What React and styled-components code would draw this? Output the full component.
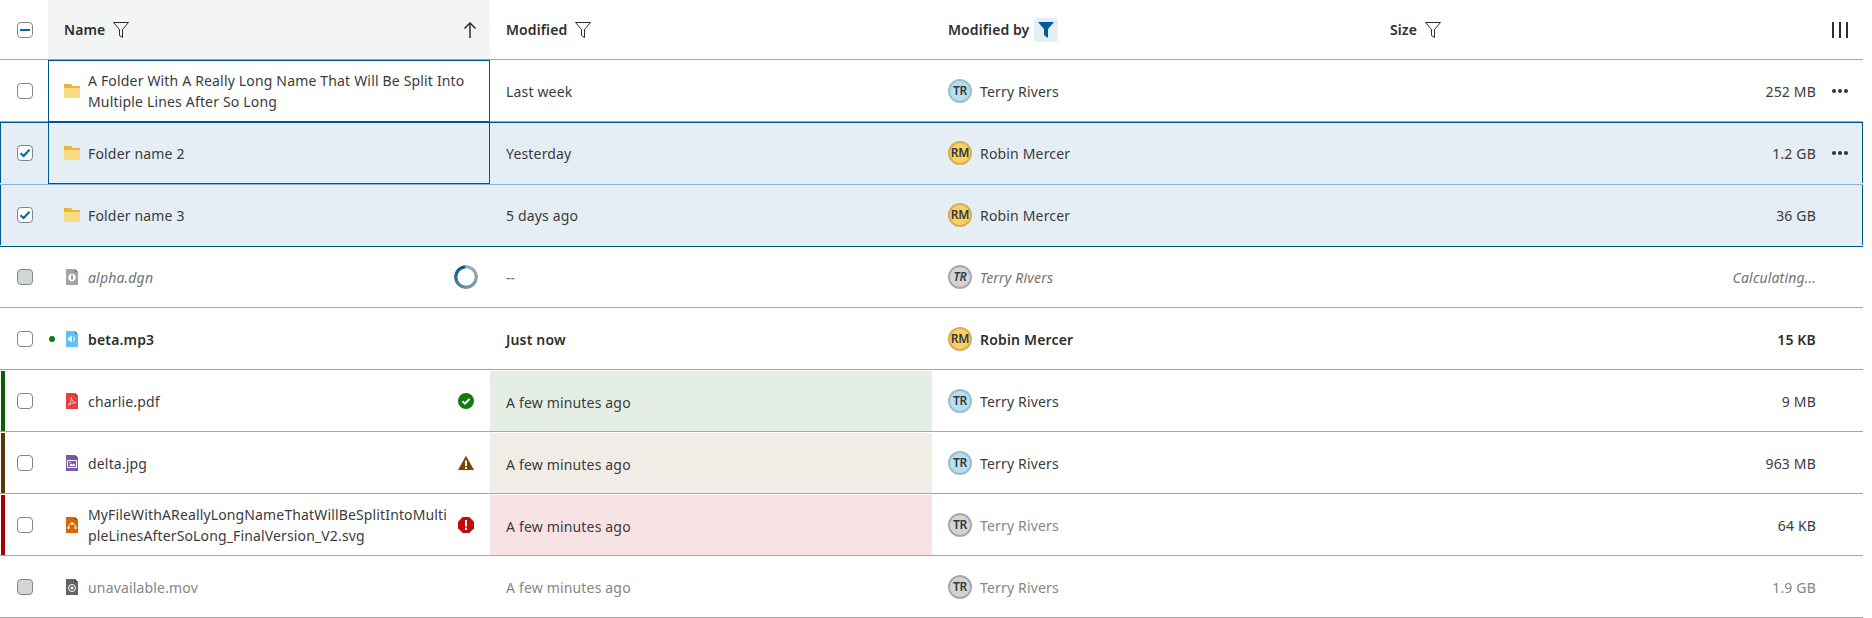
import React from "react";
import styled, { createGlobalStyle, css } from "styled-components";

const Global = createGlobalStyle`
  html, body { margin: 0; padding: 0; background: #fff; }
  body { font-family: "Noto Sans", "Open Sans", sans-serif; font-size: 14px; color: #3b3b3b; }
`;

const BLUE = "#00558a";
const LIGHT_BLUE = "#7fb6d6";
const columns = "48px 442px 442px 442px 458px 31px";

const Table = styled.div`
  width: 1863px;
  display: flex;
  flex-direction: column;
`;
const HeaderRow = styled.div`
  display: grid;
  grid-template-columns: ${columns};
  height: 60px;
  box-sizing: border-box;
  border-bottom: 1px solid #a6a6a6;
  font-weight: 600;
  letter-spacing: 0.1px;
  color: #2e2e2e;
`;
const HeaderCell = styled.div`
  display: flex;
  align-items: center;
  padding-left: ${(p) => (p.$flush ? 0 : 16)}px;
  padding-right: ${(p) => (p.$flush ? 0 : 12)}px;
  background: ${(p) => (p.$sorted ? "#f3f5f5" : "transparent")};
`;
const HeaderLabel = styled.span`
  margin-right: 8px;
`;
const Grow = styled.span`
  flex: 1;
`;
const ActiveFilter = styled.span`
  width: 24px;
  height: 24px;
  margin-left: -3px;
  border-radius: 3px;
  background: #e5eef5;
  display: flex;
  align-items: center;
  justify-content: center;
`;
const Row = styled.div`
  position: relative;
  display: grid;
  grid-template-columns: ${columns};
  height: 62px;
  box-sizing: border-box;
  border-bottom: 1px solid ${(p) => (p.$selected ? "transparent" : "#a6a6a6")};
  letter-spacing: 0.17px;
  font-weight: ${(p) => (p.$tone === "bold" ? 600 : 400)};
  font-style: ${(p) => (p.$tone === "pending" ? "italic" : "normal")};
  color: ${(p) => (p.$tone === "pending" ? "#727272" : p.$tone === "muted" ? "#858585" : p.$tone === "bold" ? "#2e2e2e" : "#3b3b3b")};
  background: ${(p) => (p.$selected ? "#e5edf5" : "#fff")};
  box-shadow: ${(p) =>
    [
      p.$top && `inset 0 1px ${p.$top}`,
      p.$selected && `inset 1px 0 ${BLUE}`,
      p.$selected && `inset -1px 0 ${BLUE}`,
    ]
      .filter(Boolean)
      .join(", ") || "none"};
  ${(p) => p.$strip && css`
    &::before {
      content: "";
      position: absolute;
      left: 1px;
      top: 1px;
      bottom: 0;
      width: 4px;
      background: ${p.$strip};
    }
  `}
`;
const CheckCell = styled.div`
  display: flex;
  align-items: center;
  justify-content: center;
  padding-left: 2px;
`;
const NameCell = styled.div`
  position: relative;
  display: flex;
  align-items: center;
  padding: 0 16px;
  ${(p) => p.$focused && css`
    &::after {
      content: "";
      position: absolute;
      inset: 0 0 -1px 0;
      border: 1px solid ${BLUE};
      pointer-events: none;
    }
  `}
`;
const TypeIcon = styled.span`
  width: 16px;
  flex: none;
  display: flex;
  justify-content: center;
  margin-right: 8px;
`;
const NewDot = styled.span`
  position: absolute;
  left: 1px;
  top: 28px;
  width: 6px;
  height: 6px;
  border-radius: 50%;
  background: #107c10;
`;
const FileName = styled.span`
  flex: 1;
  line-height: 21px;
  margin-top: ${(p) => (p.$wrapped ? 1 : 2)}px;
  ${(p) => p.$long && css`
    word-break: break-all;
    letter-spacing: 0.14px;
    padding-right: 6px;
  `}
`;
const TextCell = styled.div`
  display: flex;
  align-items: center;
  padding: 0 16px;
  ${(p) => p.$tint && css`
    background: ${p.$tint};
    background-clip: padding-box;
    border-top: 1px solid transparent;
  `}
`;
const SizeCell = styled(TextCell)`
  justify-content: flex-end;
`;
const Value = styled.span`
  margin-top: 2px;
  color: ${(p) => (p.$dim ? "#858585" : "inherit")};
`;
const ActionCell = styled.div`
  display: flex;
  align-items: center;
`;
const Avatar = styled.span`
  width: 24px;
  height: 24px;
  box-sizing: border-box;
  flex: none;
  border-radius: 50%;
  margin-right: 8px;
  border: 2px solid ${(p) => p.$ring};
  background: ${(p) => p.$fill};
  color: #2f3a40;
  font-size: 12px;
  font-weight: 600;
  letter-spacing: -0.2px;
  display: flex;
  align-items: center;
  justify-content: center;
`;
const Box = styled.span`
  width: 16px;
  height: 16px;
  box-sizing: border-box;
  border-radius: 4px;
  border: 1px solid #7f8688;
  background: ${(p) => (p.$disabled ? "#d2d6d7" : "#fff")};
  display: flex;
  align-items: center;
  justify-content: center;
`;
const Spinner = styled.span`
  width: 24px;
  height: 24px;
  flex: none;
  margin-right: -4px;
  border-radius: 50%;
  background: conic-gradient(#a6aeb3 0deg, #8ea1ae 90deg, #6d93ab 180deg, #2b6e97 270deg, #00588c 350deg, #a6aeb3 360deg);
  -webkit-mask: radial-gradient(circle, transparent 8.3px, #000 8.8px);
  mask: radial-gradient(circle, transparent 8.3px, #000 8.8px);
`;

const Funnel = () => (
  <svg width="16" height="16" viewBox="0 0 16 16" fill="none" stroke="#2e2e2e" strokeWidth="1">
    <path d="M.5 .5h15l-6 7v8l-3-2v-6z" />
  </svg>
);
const FunnelSolid = () => (
  <svg width="16" height="16" viewBox="0 0 16 16" fill="#005a9e">
    <path d="M0 0h16l-6 7v9l-4-3V7z" />
  </svg>
);
const SortUp = () => (
  <svg width="16" height="16" viewBox="0 0 16 16" fill="none" stroke="#2e2e2e" strokeWidth="1.5">
    <path d="M8 16V1M2.500 6.500 8 1l5.500 5.500" />
  </svg>
);
const ColumnsIcon = () => (
  <svg width="16" height="16" viewBox="0 0 16 16" fill="#2e2e2e">
    <path d="M0 0h2v16H0zM7 0h2v16H7zM14 0h2v16h-2z" />
  </svg>
);
const Dots = () => (
  <svg width="16" height="16" viewBox="0 0 16 16" fill="#333">
    <circle cx="2" cy="8" r="2" /><circle cx="8" cy="8" r="2" /><circle cx="14" cy="8" r="2" />
  </svg>
);
const Folder = () => (
  <svg width="16" height="14" viewBox="0 0 16 14">
    <path d="M0 0h7l1.500 2H16v2H0z" fill="#e9b63c" />
    <path d="M0 4h16v10H0z" fill="#f8da80" />
  </svg>
);
const FileBase = ({ color, children }) => (
  <svg width="12" height="16" viewBox="0 0 12 16">
    <path d="M0 0h9l3 3v13H0z" fill={color} />
    <path d="M9 0l3 3H9z" fill="rgba(0,0,0,.35)" />
    {children}
  </svg>
);
const FileDgn = () => (
  <FileBase color="#a3a3a3">
    <circle cx="6" cy="8.500" r="3.700" fill="#fff" />
    <rect x="5" y="6" width="2" height="4.800" fill="#a3a3a3" />
  </FileBase>
);
const FileAudio = () => (
  <FileBase color="#5cc1f7">
    <path d="M2 6.500h1.600L6 4.500v7l-2.400-2H2z" fill="#fff" />
    <path d="M7.400 5.500c1.400 1.400 1.400 3.600 0 5" stroke="#fff" fill="none" />
  </FileBase>
);
const FilePdf = () => (
  <FileBase color="#e34040">
    <path d="M2 12.500c2-1 3.600-5 3.400-8 .3 3 2 4.800 4.600 5.200-2.400 0-5.800.8-8 2.800z" fill="none" stroke="#fbd5d5" strokeWidth=".9" />
  </FileBase>
);
const FileImage = () => (
  <FileBase color="#7c57a6">
    <path d="M1.500 5.500h9v7h-9z" fill="none" stroke="#fff" />
    <path d="M3 11l2-2.500 1.500 1.200L8 8.500l1.500 2.500z" fill="#fff" />
    <circle cx="4" cy="7.500" r=".8" fill="#fff" />
  </FileBase>
);
const FileVector = () => (
  <FileBase color="#d16a00">
    <path d="M2.400 11c0-3 1.500-4.500 3.600-4.500S9.600 8 9.600 11" fill="none" stroke="#fff" />
    <path d="M1.500 10h2v2h-2zM8.500 10h2v2h-2zM5 5.500h2v2H5z" fill="#fff" />
  </FileBase>
);
const FileVideo = () => (
  <FileBase color="#636363">
    <circle cx="6" cy="9" r="3.500" fill="none" stroke="#fff" />
    <circle cx="6" cy="9" r="1.500" fill="#fff" />
  </FileBase>
);
const StatusOk = () => (
  <svg width="16" height="16" viewBox="0 0 16 16">
    <circle cx="8" cy="8" r="8" fill="#107c10" />
    <path d="M4.500 8.200 7 10.600 11.500 6" fill="none" stroke="#fff" strokeWidth="2" />
  </svg>
);
const StatusWarn = () => (
  <svg width="16" height="16" viewBox="0 0 16 16">
    <path d="M8 .8 16 15H0z" fill="#7a4300" />
    <path d="M7 5.500h2V11H7zM7 12h2v2H7z" fill="#fff" />
  </svg>
);
const StatusError = () => (
  <svg width="16" height="16" viewBox="0 0 16 16">
    <path d="M4.700 0h6.600L16 4.700v6.600L11.300 16H4.700L0 11.300V4.700z" fill="#c40b0b" />
    <path d="M7 3h2v6.500H7zM7 10.800h2V13H7z" fill="#fff" />
  </svg>
);
const Check = ({ mode }) => (
  <Box>
    <svg width="12" height="12" viewBox="0 0 12 12" fill="none" stroke="#0068a8" strokeWidth="2">
      {mode === "mixed" ? <path d="M1 6h10" /> : <path d="M1.500 6.200 4.600 9 10.500 2.800" />}
    </svg>
  </Box>
);

const people = {
  TR: { name: "Terry Rivers", fill: "#b7deef", ring: "#9dbdcc" },
  RM: { name: "Robin Mercer", fill: "#ffd060", ring: "#d6ae56" },
  off: { name: "Terry Rivers", fill: "#d4d4d4", ring: "#a9a9a9" },
};

const rows = [
  { icon: <Folder />, name: "A Folder With A Really Long Name That Will Be Split Into Multiple Lines After So Long", wrapped: true, mod: "Last week", who: "TR", initials: "TR", size: "252 MB", focused: true, more: true },
  { icon: <Folder />, name: "Folder name 2", mod: "Yesterday", who: "RM", initials: "RM", size: "1.2 GB", focused: true, selected: true, top: BLUE, more: true },
  { icon: <Folder />, name: "Folder name 3", mod: "5 days ago", who: "RM", initials: "RM", size: "36 GB", selected: true, top: LIGHT_BLUE },
  { icon: <FileDgn />, name: "alpha.dgn", mod: "--", who: "off", initials: "TR", size: "Calculating...", tone: "pending", disabled: true, top: BLUE, trail: <Spinner /> },
  { icon: <FileAudio />, name: "beta.mp3", mod: "Just now", who: "RM", initials: "RM", size: "15 KB", tone: "bold", fresh: true },
  { icon: <FilePdf />, name: "charlie.pdf", mod: "A few minutes ago", who: "TR", initials: "TR", size: "9 MB", strip: "#0b5c0b", tint: "#e5eee5", trail: <StatusOk /> },
  { icon: <FileImage />, name: "delta.jpg", mod: "A few minutes ago", who: "TR", initials: "TR", size: "963 MB", strip: "#5a3505", tint: "#f0ece6", trail: <StatusWarn /> },
  { icon: <FileVector />, name: "MyFileWithAReallyLongNameThatWillBeSplitIntoMultipleLinesAfterSoLong_FinalVersion_V2.svg", long: true, wrapped: true, mod: "A few minutes ago", who: "off", initials: "TR", size: "64 KB", strip: "#a30000", tint: "#f8e3e4", trail: <StatusError />, dimWho: true },
  { icon: <FileVideo />, name: "unavailable.mov", mod: "A few minutes ago", who: "off", initials: "TR", size: "1.9 GB", tone: "muted", disabled: true },
];

export default function App() {
  return (
    <>
      <Global />
      <Table>
        <HeaderRow>
          <CheckCell><Check mode="mixed" /></CheckCell>
          <HeaderCell $sorted>
            <HeaderLabel>Name</HeaderLabel>
            <Funnel />
            <Grow />
            <SortUp />
          </HeaderCell>
          <HeaderCell><HeaderLabel>Modified</HeaderLabel><Funnel /></HeaderCell>
          <HeaderCell><HeaderLabel>Modified by</HeaderLabel><ActiveFilter><FunnelSolid /></ActiveFilter></HeaderCell>
          <HeaderCell><HeaderLabel>Size</HeaderLabel><Funnel /></HeaderCell>
          <HeaderCell $flush><ColumnsIcon /></HeaderCell>
        </HeaderRow>
        {rows.map((r) => {
          const person = people[r.who];
          return (
            <Row key={r.name} $tone={r.tone} $selected={r.selected} $top={r.top} $strip={r.strip}>
              <CheckCell>
                {r.selected ? <Check /> : <Box $disabled={r.disabled} />}
              </CheckCell>
              <NameCell $focused={r.focused}>
                {r.fresh && <NewDot />}
                <TypeIcon>{r.icon}</TypeIcon>
                <FileName $long={r.long} $wrapped={r.wrapped}>{r.name}</FileName>
                {r.trail}
              </NameCell>
              <TextCell $tint={r.tint}><Value>{r.mod}</Value></TextCell>
              <TextCell>
                <Avatar $fill={person.fill} $ring={person.ring}>{r.initials}</Avatar>
                <Value $dim={r.dimWho}>{person.name}</Value>
              </TextCell>
              <SizeCell><Value>{r.size}</Value></SizeCell>
              <ActionCell>{r.more && <Dots />}</ActionCell>
            </Row>
          );
        })}
      </Table>
    </>
  );
}
